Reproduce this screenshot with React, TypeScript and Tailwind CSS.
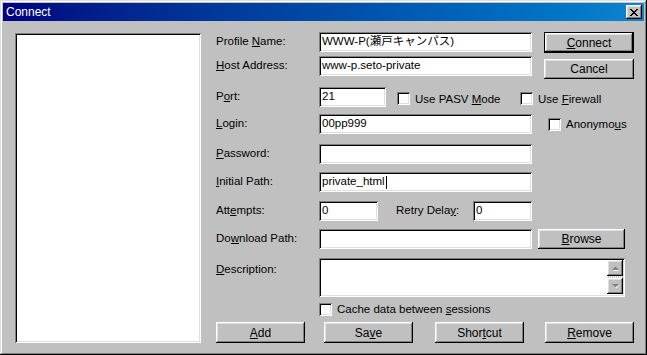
import React from 'react';

// Win98-style bevels
const raised =
  'bg-[#c0c0c0] shadow-[inset_-1px_-1px_#000000,inset_1px_1px_#ffffff,inset_-2px_-2px_#808080,inset_2px_2px_#dfdfdf]';
const sunken =
  'bg-white shadow-[inset_1px_1px_#808080,inset_-1px_-1px_#ffffff,inset_2px_2px_#000000,inset_-2px_-2px_#dfdfdf]';

function Field({ w, h = 'h-[20px]', value, caret }: { w: string; h?: string; value?: string; caret?: boolean }) {
  return (
    <div className={`${sunken} ${w} ${h} flex items-center pl-[3px] text-[11.5px] text-black whitespace-nowrap`}>
      {value}
      {caret && <span className="inline-block w-[1px] h-[13px] bg-black ml-[1px]" />}
    </div>
  );
}

function Check({ children, className = '' }: { children: React.ReactNode; className?: string }) {
  return (
    <div className={`flex items-center gap-[5px] ${className}`}>
      <div className={`${sunken} w-[13px] h-[13px] shrink-0`} />
      <span className="text-[11.5px] leading-[14px] whitespace-nowrap">{children}</span>
    </div>
  );
}

function Btn({ w, h = 'h-[21px]', children, className = '' }: { w: string; h?: string; children: React.ReactNode; className?: string }) {
  return (
    <button className={`${raised} ${w} ${h} flex items-center justify-center text-[12px] text-black ${className}`}>
      {children}
    </button>
  );
}

function Label({ children, w = 'w-[103px]' }: { children: React.ReactNode; w?: string }) {
  return <span className={`${w} shrink-0 text-[11.5px] whitespace-nowrap`}>{children}</span>;
}

function Arrow({ up }: { up?: boolean }) {
  return (
    <svg width="7" height="5" viewBox="0 0 7 5">
      {up ? (
        <>
          <path d="M1 5 L4 2 L7 5 Z" fill="#ffffff" />
          <path d="M0 4 L3.5 0.5 L7 4 Z" fill="#808080" />
        </>
      ) : (
        <>
          <path d="M1 1 L4 4.5 L7 1 Z" fill="#ffffff" />
          <path d="M0 0 L3.5 3.5 L7 0 Z" fill="#808080" />
        </>
      )}
    </svg>
  );
}

export default function App() {
  return (
    <div className="w-[647px] h-[355px] bg-[#c0c0c0] p-[3px] flex flex-col text-black font-[family-name:'Liberation_Sans','Noto_Sans_CJK_JP',sans-serif] shadow-[inset_-1px_-1px_#000000,inset_1px_1px_#dfdfdf,inset_-2px_-2px_#808080,inset_2px_2px_#ffffff]">
      {/* Title bar */}
      <div className="h-[18px] flex items-center justify-between pl-[3px] pr-[2px] bg-gradient-to-r from-[#000080] to-[#1084d0]">
        <span className="text-white text-[12px]">Connect</span>
        <button className={`${raised} w-[16px] h-[14px] flex items-center justify-center`}>
          <svg width="8" height="7" viewBox="0 0 8 7">
            <path d="M0 0h2v1h1v1h2V1h1V0h2v1H7v1H6v1H5v1h1v1h1v1h1v1H6V6H5V5H3v1H2v1H0V6h1V5h1V4h1V3H2V2H1V1H0z" fill="#000" />
          </svg>
        </button>
      </div>

      {/* Body */}
      <div className="flex pt-[12px] pl-[12px]">
        <div className={`${sunken} w-[186px] h-[310px]`} />

        <div className="ml-[15px] -mt-[1px] flex flex-col">
          {/* Profile Name */}
          <div className="flex items-start h-[20px]">
            <div className="flex items-center h-[20px]">
              <Label>Profile <u>N</u>ame:</Label>
              <Field w="w-[213px]" value="WWW-P(瀬戸キャンパス)" />
            </div>
            <div className="ml-[12px] border border-black">
              <Btn w="w-[88px]" h="h-[19px]"><span><u>C</u>onnect</span></Btn>
            </div>
          </div>

          {/* Host Address */}
          <div className="flex items-start h-[20px] mt-[4px]">
            <div className="flex items-center h-[20px]">
              <Label><u>H</u>ost Address:</Label>
              <Field w="w-[213px]" value="www-p.seto-private" />
            </div>
            <Btn w="w-[90px]" h="h-[20px]" className="ml-[12px] mt-[3px]">Cancel</Btn>
          </div>

          {/* Port */}
          <div className="flex items-center h-[20px] mt-[11px]">
            <Label>P<u>o</u>rt:</Label>
            <Field w="w-[67px]" value="21" />
            <Check className="ml-[11px] w-[123px] mt-[3px]">Use PASV <u>M</u>ode</Check>
            <Check className="mt-[3px]">Use <u>F</u>irewall</Check>
          </div>

          {/* Login */}
          <div className="flex items-center h-[20px] mt-[7px]">
            <Label><u>L</u>ogin:</Label>
            <Field w="w-[213px]" value="00pp999" />
            <Check className="ml-[16px]">Anonymo<u>u</u>s</Check>
          </div>

          {/* Password */}
          <div className="flex items-center h-[20px] mt-[10px]">
            <Label><u>P</u>assword:</Label>
            <Field w="w-[213px]" />
          </div>

          {/* Initial Path */}
          <div className="flex items-center h-[20px] mt-[8px]">
            <Label><u>I</u>nitial Path:</Label>
            <Field w="w-[213px]" value="private_html" caret />
          </div>

          {/* Attempts / Retry Delay */}
          <div className="flex items-center h-[20px] mt-[9px]">
            <Label>Att<u>e</u>mpts:</Label>
            <Field w="w-[59px]" value="0" />
            <span className="ml-[18px] w-[77px] text-[11.5px] whitespace-nowrap">Retry Dela<u>y</u>:</span>
            <Field w="w-[59px]" value="0" />
          </div>

          {/* Download Path */}
          <div className="flex items-center h-[20px] mt-[8px]">
            <Label>Do<u>w</u>nload Path:</Label>
            <Field w="w-[213px]" />
            <Btn w="w-[87px]" h="h-[20px]" className="ml-[6px]"><span><u>B</u>rowse</span></Btn>
          </div>

          {/* Description */}
          <div className="flex items-start mt-[9px]">
            <span className="w-[103px] shrink-0 text-[11.5px] mt-[3px]"><u>D</u>escription:</span>
            <div className={`${sunken} w-[306px] h-[39px] flex justify-end p-[2px]`}>
              <div className="flex flex-col w-[16px]">
                <div className={`${raised} h-[16px] flex items-center justify-center`}><Arrow up /></div>
                <div className="h-[2px] bg-[repeating-linear-gradient(90deg,#ffffff_0_1px,#c0c0c0_1px_2px)]" />
                <div className={`${raised} h-[16px] flex items-center justify-center`}><Arrow /></div>
              </div>
            </div>
          </div>

          {/* Cache */}
          <div className="flex mt-[5px] pl-[103px]">
            <Check>Cache data between <u>s</u>essions</Check>
          </div>

          {/* Bottom buttons */}
          <div className="flex mt-[6px]">
            <Btn w="w-[89px]"><span><u>A</u>dd</span></Btn>
            <Btn w="w-[89px]" className="ml-[19px]"><span>Sa<u>v</u>e</span></Btn>
            <Btn w="w-[89px]" className="ml-[22px]"><span>Shor<u>t</u>cut</span></Btn>
            <Btn w="w-[89px]" className="ml-[21px]"><span><u>R</u>emove</span></Btn>
          </div>
        </div>
      </div>
    </div>
  );
}
